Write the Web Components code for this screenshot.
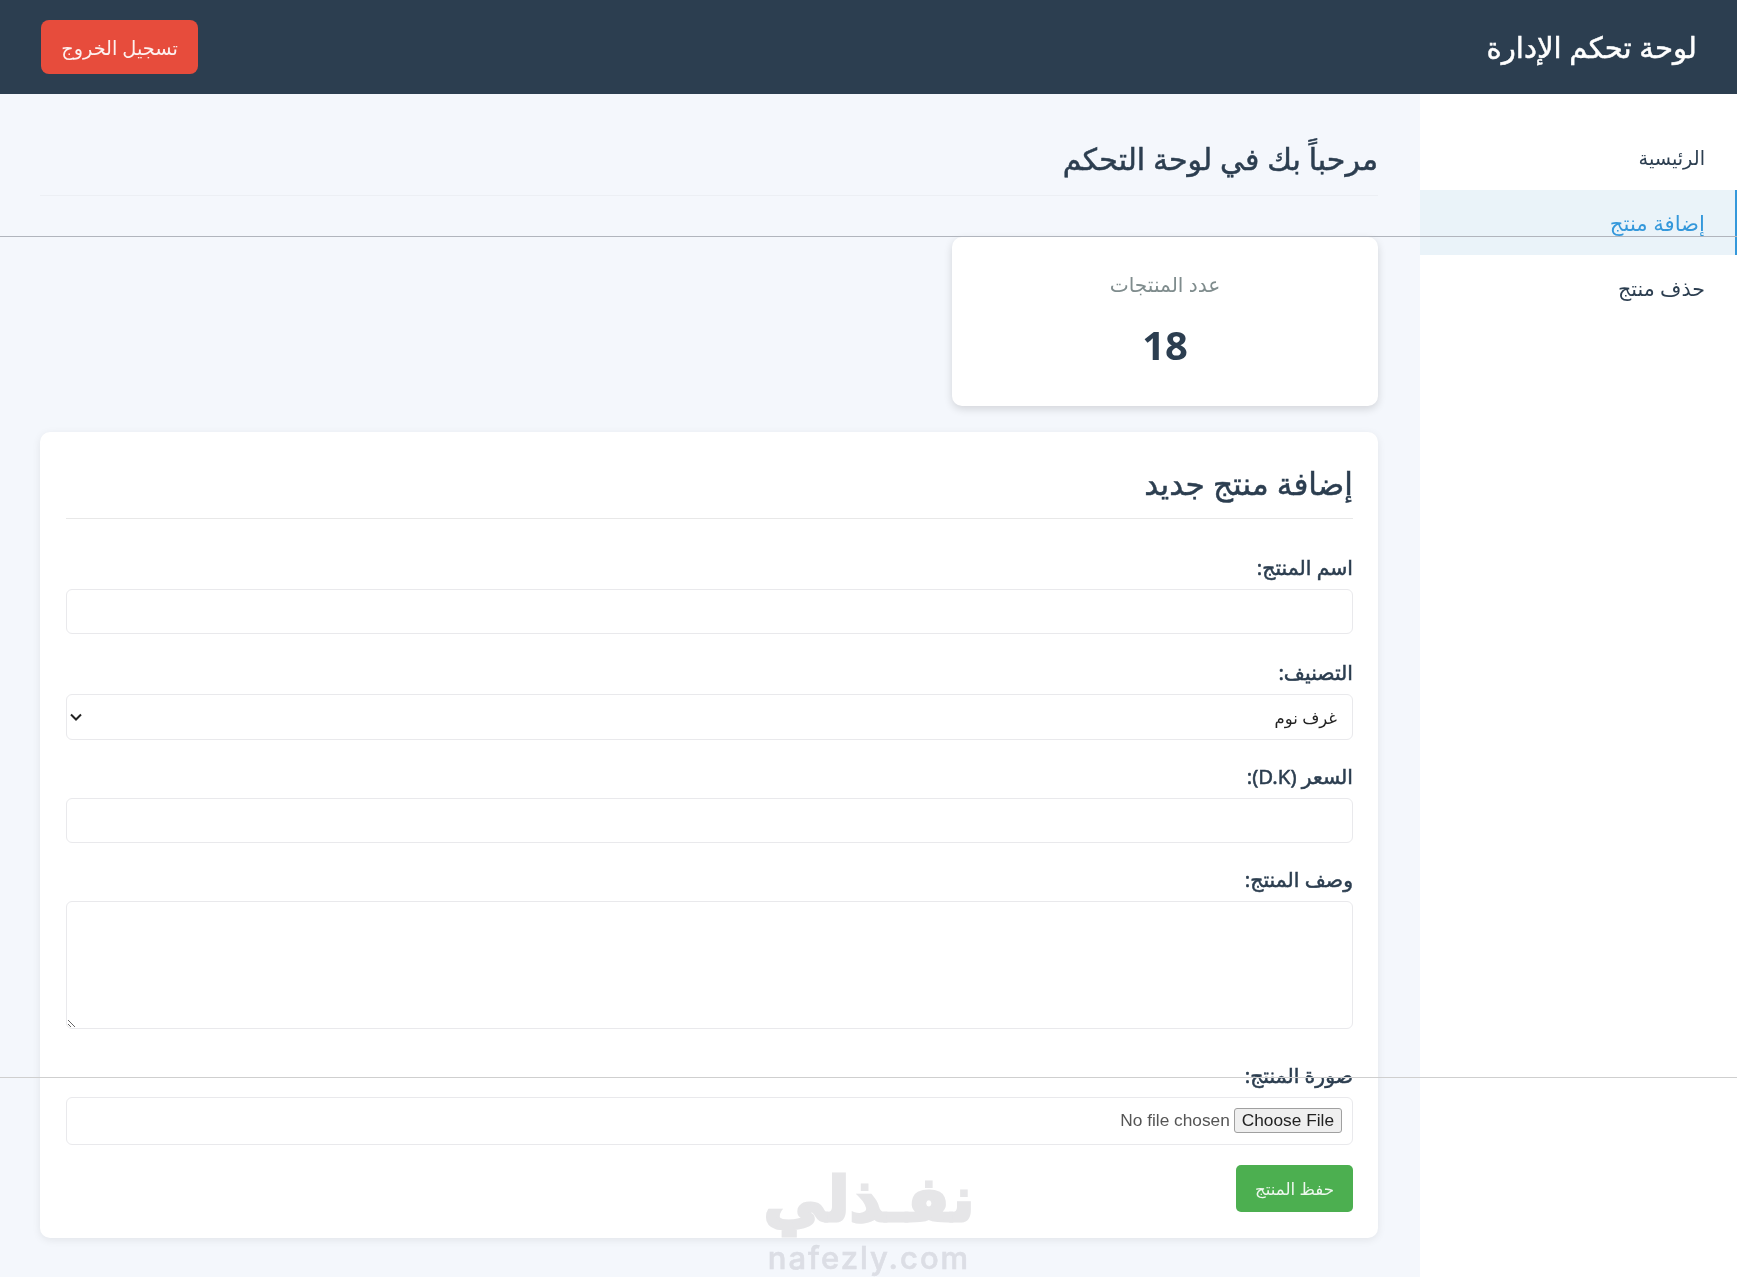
<!DOCTYPE html>
<html lang="ar" dir="rtl">
<head>
<meta charset="utf-8">
<title>لوحة تحكم الإدارة</title>
<style>
  html, body { margin: 0; height: 1277px; overflow: hidden; }
  body { font-family: "Noto Sans", "DejaVu Sans", sans-serif; background: #f4f7fc; color: #2c3e50; position: relative; }
  .shell { display: flex; height: 1183px; }
</style>
</head>
<body>
<admin-header title-text="لوحة تحكم الإدارة" action="تسجيل الخروج"></admin-header>
<div class="shell">
  <side-nav>
    <nav-item>الرئيسية</nav-item>
    <nav-item active style="--fs:21.2px">إضافة منتج</nav-item>
    <nav-item style="--fs:20.6px">حذف منتج</nav-item>
  </side-nav>
  <main-area>
    <page-title>مرحباً بك في لوحة التحكم</page-title>
    <stat-card label="عدد المنتجات" value="18"></stat-card>
    <product-form></product-form>
  </main-area>
</div>
<scan-line style="top:236px;--c:#b1b5bd"></scan-line>
<scan-line style="top:1077px;--c:#cfcfcf"></scan-line>
<water-mark></water-mark>

<script>
const define = (name, html, cls) => {
  customElements.define(name, class extends HTMLElement {
    constructor() {
      super();
      this.attachShadow({ mode: "open" }).innerHTML = html;
    }
    connectedCallback() { if (cls) cls.call(this); }
  });
};

define("admin-header", `
  <style>
    :host { display: flex; align-items: center; justify-content: space-between; height: 94px; padding: 0 40px 0 41px; box-sizing: border-box; background: #2c3e50; color: #fff; }
    h1 { margin: 0; font-size: 29.2px; font-weight: 400; -webkit-text-stroke: .5px currentColor; }
    button { width: 157px; height: 54px; border: 0; border-radius: 8px; background: #e74c3c; color: rgba(255,255,255,.92); font: inherit; font-size: 19.3px; padding: 0; }
  </style>
  <h1></h1><button></button>`, function () {
  this.shadowRoot.querySelector("h1").textContent = this.getAttribute("title-text");
  this.shadowRoot.querySelector("button").textContent = this.getAttribute("action");
});

define("side-nav", `
  <style>:host { display: block; width: 317px; flex: none; background: #fff; padding-top: 31px; box-sizing: border-box; }</style>
  <slot></slot>`);

define("nav-item", `
  <style>
    :host { display: flex; align-items: center; height: 65px; padding: 0 32px; box-sizing: border-box; font-size: var(--fs, 19.3px); color: #2c3e50; }
    :host([active]) { background: #eaf3f9; color: #3498db; border-right: 2px solid #3498db; padding-right: 30px; }
  </style>
  <slot></slot>`);

define("main-area", `
  <style>:host { display: block; flex: 1; min-width: 0; padding: 30px 42px 0 40px; box-sizing: border-box; }</style>
  <slot></slot>`);

define("page-title", `
  <style>
    :host { display: block; height: 71px; border-bottom: 1px solid #eceff4; margin-bottom: 41px; font-size: 30px; font-weight: 400; -webkit-text-stroke: .5px currentColor; }
    div { line-height: 70px; }
  </style>
  <div><slot></slot></div>`);

define("stat-card", `
  <style>
    :host { display: block; width: 426px; height: 169px; box-sizing: border-box; background: #fff; border-radius: 10px; box-shadow: 0 3px 8px rgba(0,0,0,.14); text-align: center; padding-top: 31px; margin-bottom: 26px; }
    .l { font-size: 20.2px; color: #7f8c8d; line-height: 32px; }
    .v { font-size: 40px; font-weight: 700; line-height: 50px; margin-top: 20px; font-family: "Open Sans", sans-serif; }
  </style>
  <div class="l"></div><div class="v"></div>`, function () {
  this.shadowRoot.querySelector(".l").textContent = this.getAttribute("label");
  this.shadowRoot.querySelector(".v").textContent = this.getAttribute("value");
});

define("product-form", `
  <style>
    :host { display: block; height: 806px; box-sizing: border-box; background: #fff; border-radius: 10px; box-shadow: 0 2px 8px rgba(0,0,0,.08); padding: 26px 25px 26px 26px; font-size: 18px; }
    h3 { margin: 0 0 37px; height: 61px; line-height: 50px; font-size: 31.2px; font-weight: 400; -webkit-text-stroke: .5px currentColor; border-bottom: 1px solid #e8e8e8; box-sizing: border-box; }
    label { display: block; font-weight: 400; -webkit-text-stroke: .5px currentColor; line-height: 23px; margin-bottom: 10px; color: #2c3e50; font-size: 20.4px; }
    input, select, textarea { display: block; width: 100%; box-sizing: border-box; border: 1px solid #e9e9ec; border-radius: 6px; background: #fff; font: inherit; margin: 0; }
    input { height: 45px; }
    select { height: 46px; padding: 0 15px; font-size: 16.5px; color: #222; appearance: none; }
    textarea { height: 128px; resize: vertical; }
    input[type=file] { height: 48px; padding: 10px; font: 17.3px "Liberation Sans", sans-serif; color: #555; }
    input[type=file]::file-selector-button { color: #222; background: #efefef; border: 1px solid #a0a0a0; border-radius: 3px; padding: 1px 7px; }
    button { display: block; width: 117px; height: 47px; border: 0; border-radius: 5px; background: #4caf50; color: rgba(255,255,255,.9); font: inherit; font-size: 16.7px; padding: 0; }
    .f { margin-bottom: 25px; }
    .f.first { margin-bottom: 27px; }
    .f.tall { margin-bottom: 35px; }
    .f.last { margin-bottom: 20px; }
    .pick { position: relative; }
    .pick svg { position: absolute; left: 4px; top: 17px; width: 12px; height: 12px; pointer-events: none; }
  </style>
  <h3>إضافة منتج جديد</h3>
  <div class="f first"><label>اسم المنتج:</label><input type="text"></div>
  <div class="f"><label>التصنيف:</label>
    <div class="pick"><select><option>غرف نوم</option></select>
      <svg viewBox="0 0 12 12"><path d="M1 3.5 6 8.5 11 3.5" fill="none" stroke="#222" stroke-width="2"/></svg>
    </div>
  </div>
  <div class="f"><label>السعر (D.K):</label><input type="text"></div>
  <div class="f tall"><label>وصف المنتج:</label><textarea></textarea></div>
  <div class="f last"><label>صورة المنتج:</label><input type="file"></div>
  <button>حفظ المنتج</button>`);

define("scan-line", `
  <style>:host { display: block; position: absolute; left: 0; right: 0; height: 1px; background: var(--c); }</style>`);

define("water-mark", `
  <style>
    :host { display: block; position: absolute; left: 754px; top: 1160px; width: 230px; text-align: center; color: #e6e6e8; mix-blend-mode: multiply; font-family: "DejaVu Sans", sans-serif; font-weight: 700; pointer-events: none; }
    .a { font-size: 62px; line-height: 80px; -webkit-text-stroke: 3px currentColor; }
    .b { font-size: 31px; line-height: 36px; direction: ltr; font-weight: 500; font-family: "Inter", sans-serif; letter-spacing: 2px; -webkit-text-stroke: .6px currentColor; }
  </style>
  <div class="a">نفـذلي</div><div class="b">nafezly.com</div>`);
</script>
</body>
</html>
